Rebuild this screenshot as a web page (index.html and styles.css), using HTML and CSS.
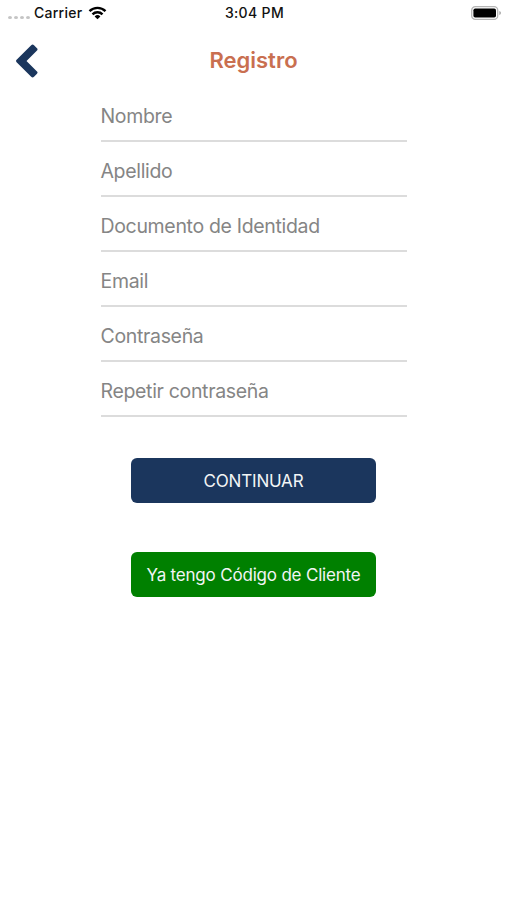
FILE: index.html
```html
<!DOCTYPE html>
<html lang="es">
<head>
<meta charset="utf-8">
<title>Registro</title>
<link rel="stylesheet" href="styles.css">
</head>
<body>
<div class="status">
  <div class="carrier">
    <span class="signal"><i></i><i></i><i></i><i></i></span>
    <span class="carrier-name">Carrier</span>
    <svg class="wifi" viewBox="0 0 18 14" width="19" height="14">
      <g fill="none" stroke="#000" stroke-width="2.4">
        <path d="M1 5.1A11.5 11.5 0 0 1 17 5.1"/>
        <path d="M4 8.3A7.1 7.1 0 0 1 14 8.3"/>
      </g>
      <path d="M9 13.3 6.1 10.4A4.1 4.1 0 0 1 11.9 10.4Z"/>
    </svg>
  </div>
  <span class="time">3:04 PM</span>
  <svg class="battery" viewBox="0 0 32 16" width="32" height="16">
    <rect x="1.7" y="1.7" width="26" height="12.6" rx="3.6" fill="#fff" stroke="#b5b5b5" stroke-width="1.3"/>
    <rect x="3.4" y="3.4" width="22.6" height="9.2" rx="1.8"/>
    <path d="M29.3 6Q31 6.5 31 8T29.3 10Z" fill="#a8a8a8"/>
  </svg>
</div>
<header class="header">
  <svg class="back" viewBox="0 0 24 36" width="24" height="36"><path d="M2.6 16.8 17.2 2.2Q18.6.9 20 2.2L23 5.2Q24.1 6.4 23 7.6L12.5 18 23 28.4Q24.1 29.6 23 30.8L20 33.8Q18.6 35.1 17.2 33.8L2.6 19.2Q1.5 18 2.6 16.8Z" fill="#1b365d"/></svg>
  <h1 class="title">Registro</h1>
</header>
<main class="form">
  <div class="field">Nombre</div>
  <div class="field">Apellido</div>
  <div class="field">Documento de Identidad</div>
  <div class="field">Email</div>
  <div class="field">Contraseña</div>
  <div class="field">Repetir contraseña</div>
  <button class="button primary">CONTINUAR</button>
  <button class="button client">Ya tengo Código de Cliente</button>
</main>
</body>
</html>
```
FILE: styles.css
```css
* { box-sizing: border-box; }
body { margin: 0; width: 507px; height: 900px; overflow: hidden; background: #fff; font-family: Inter, "Liberation Sans", sans-serif; }
.status { height: 26px; display: grid; grid-template-columns: 1fr auto 1fr; align-items: center; padding: 0 5px 0 8px; color: #111; font-size: 14px; font-weight: 500; line-height: 26px; }
.carrier { display: flex; align-items: center; }
.signal { display: flex; gap: 2px; width: 26px; padding-top: 8px; }
.signal i { width: 4px; height: 3px; border-radius: 50%; background: #c4c4c4; }
.carrier-name { width: 54px; letter-spacing: .25px; }
.time { margin-left: -1px; letter-spacing: .35px; }
.battery { justify-self: end; }
.header { height: 61px; display: grid; grid-template-columns: 40px 1fr 40px; align-items: center; padding: 0 14px; }
.back { margin: 9px 0 0; }
.title { margin: 7px 0 0; color: #c96f50; font-size: 22px; line-height: 28px; font-weight: 600; text-align: center; }
.form { display: flex; flex-direction: column; align-items: center; }
.field { width: 306px; height: 55px; padding: 16px 0 0; border-bottom: 2px solid #dcdcdc; color: #858585; font-size: 19.5px; line-height: 26px; letter-spacing: -.33px; white-space: nowrap; }
.button { width: 245px; height: 45px; padding: 1px 0 0; border: 0; border-radius: 6px; color: #f2f5f5; font-family: inherit; font-size: 17px; line-height: 44px; letter-spacing: -.19px; text-align: center; white-space: nowrap; }
.primary { margin-top: 41px; background: #1b365d; }
.client { margin-top: 49px; background: #008000; }
```
